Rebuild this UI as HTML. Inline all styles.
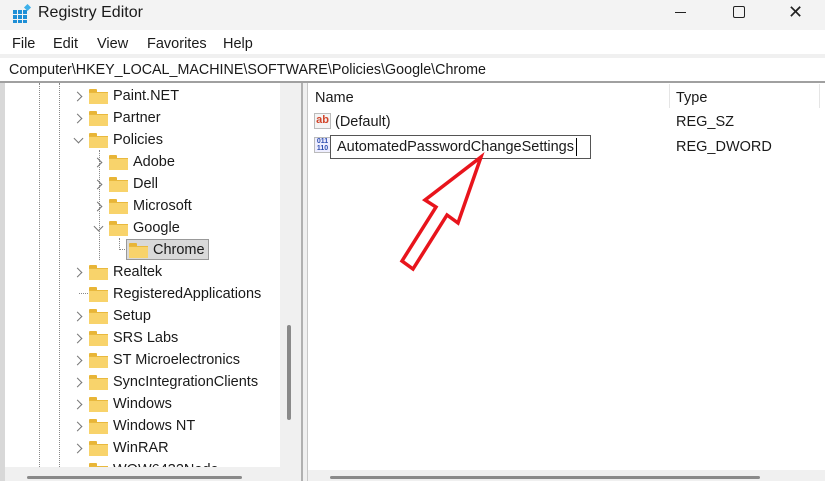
<!DOCTYPE html>
<html><head><style>
*{margin:0;padding:0;box-sizing:border-box}
body{width:825px;height:481px;overflow:hidden;background:#fff;font-family:"Liberation Sans",sans-serif;color:#1a1a1a;position:relative}
.a{position:absolute;white-space:nowrap}
.t{font-size:14.5px}
.fold{position:absolute;width:19px;height:14px}
.fold:before{content:"";position:absolute;left:0;top:0;width:8px;height:4px;background:#e8b537;border-radius:1px 1px 0 0}
.fold:after{content:"";position:absolute;left:0;top:3px;width:19px;height:11px;background:#f8d36b;border-top:1px solid #e9b93e}
.chev{position:absolute;width:7px;height:7px;border-right:1.5px solid #777;border-bottom:1.5px solid #777}
.r{transform:rotate(-45deg)}
.d{transform:rotate(45deg)}
.vd{position:absolute;width:0;border-left:1px dotted #888}
</style></head><body>
<div class="a" style="left:0;top:0;width:825px;height:30px;background:#f3f3f3"></div>
<svg class="a" style="left:12px;top:4px" width="20" height="20" viewBox="0 0 20 20"><g fill="#1e8fd6"><rect x="1" y="6" width="4" height="4"/><rect x="6" y="6" width="4" height="4"/><rect x="1" y="11" width="4" height="4"/><rect x="6" y="11" width="4" height="4"/><rect x="11" y="11" width="4" height="4"/><rect x="1" y="16" width="4" height="3"/><rect x="6" y="16" width="4" height="3"/><rect x="11" y="16" width="4" height="3"/><rect x="11" y="6" width="4" height="4"/></g><rect x="13" y="1" width="5" height="5" fill="#3fb1ea" transform="rotate(45 15.5 3.5)"/></svg>
<div class="a" style="left:38px;top:4px;font-size:16px">Registry Editor</div>
<div class="a" style="left:675px;top:12px;width:11px;border-top:1px solid #222"></div>
<div class="a" style="left:733px;top:6px;width:12px;height:12px;border:1.3px solid #222;border-radius:2px"></div>
<div class="a" style="left:788px;top:2px;font-size:18px;color:#222">✕</div>
<div class="a t" style="left:12px;top:36px">File</div>
<div class="a t" style="left:53px;top:36px">Edit</div>
<div class="a t" style="left:97px;top:36px">View</div>
<div class="a t" style="left:147px;top:36px">Favorites</div>
<div class="a t" style="left:223px;top:36px">Help</div>
<div class="a" style="left:0;top:54px;width:825px;height:4px;background:#f0f0f0"></div>
<div class="a" style="left:9px;top:62px;font-size:14.3px">Computer\HKEY_LOCAL_MACHINE\SOFTWARE\Policies\Google\Chrome</div>
<div class="a" style="left:0;top:81px;width:825px;height:2px;background:#a0a0a0"></div>
<div class="a" style="left:0;top:83px;width:5px;height:398px;background:#d8d8d8"></div>
<div class="a" style="left:280px;top:83px;width:22px;height:398px;background:#f0f0f0"></div>
<div class="a" style="left:287px;top:325px;width:4px;height:95px;background:#8a8a8a;border-radius:2px"></div>
<div class="a" style="left:301px;top:83px;width:2px;height:398px;background:#b0b0b0"></div>
<div class="a" style="left:303px;top:83px;width:5px;height:398px;background:#f0f0f0"></div>
<div class="a" style="left:307px;top:83px;width:1px;height:398px;background:#c8c8c8"></div>
<div class="a" style="left:5px;top:467px;width:275px;height:14px;background:#f0f0f0"></div>
<div class="a" style="left:27px;top:476px;width:215px;height:3px;background:#8a8a8a;border-radius:2px"></div>
<div class="a" style="left:308px;top:470px;width:517px;height:11px;background:#f0f0f0"></div>
<div class="a" style="left:330px;top:476px;width:430px;height:3px;background:#8a8a8a;border-radius:2px"></div>
<div class="vd" style="left:39px;top:83px;height:384px"></div>
<div class="vd" style="left:59px;top:83px;height:384px"></div>
<div class="vd" style="left:99px;top:150px;height:110px"></div>
<div class="vd" style="left:119px;top:238px;height:12px"></div>
<div class="a" style="left:119px;top:249px;width:10px;border-top:1px dotted #888"></div>
<div class="a" style="left:79px;top:293px;width:9px;border-top:1px dotted #888"></div>

<div class="chev r" style="left:74px;top:93px"></div><div class="fold" style="left:89px;top:89px"></div><div class="a t" style="left:113px;top:88px">Paint.NET</div>
<div class="chev r" style="left:74px;top:115px"></div><div class="fold" style="left:89px;top:111px"></div><div class="a t" style="left:113px;top:110px">Partner</div>
<div class="chev d" style="left:75px;top:135px"></div><div class="fold" style="left:89px;top:133px"></div><div class="a t" style="left:113px;top:132px">Policies</div>
<div class="chev r" style="left:94px;top:159px"></div><div class="fold" style="left:109px;top:155px"></div><div class="a t" style="left:133px;top:154px">Adobe</div>
<div class="chev r" style="left:94px;top:181px"></div><div class="fold" style="left:109px;top:177px"></div><div class="a t" style="left:133px;top:176px">Dell</div>
<div class="chev r" style="left:94px;top:203px"></div><div class="fold" style="left:109px;top:199px"></div><div class="a t" style="left:133px;top:198px">Microsoft</div>
<div class="chev d" style="left:95px;top:223px"></div><div class="fold" style="left:109px;top:221px"></div><div class="a t" style="left:133px;top:220px">Google</div>
<div class="a" style="left:126px;top:239px;width:83px;height:21px;background:#d9d9d9;border:1px solid #999"></div>
<div class="fold" style="left:129px;top:243px"></div><div class="a t" style="left:153px;top:242px">Chrome</div>
<div class="chev r" style="left:74px;top:269px"></div><div class="fold" style="left:89px;top:265px"></div><div class="a t" style="left:113px;top:264px">Realtek</div>
<div class="fold" style="left:89px;top:287px"></div><div class="a t" style="left:113px;top:286px">RegisteredApplications</div>
<div class="chev r" style="left:74px;top:313px"></div><div class="fold" style="left:89px;top:309px"></div><div class="a t" style="left:113px;top:308px">Setup</div>
<div class="chev r" style="left:74px;top:335px"></div><div class="fold" style="left:89px;top:331px"></div><div class="a t" style="left:113px;top:330px">SRS Labs</div>
<div class="chev r" style="left:74px;top:357px"></div><div class="fold" style="left:89px;top:353px"></div><div class="a t" style="left:113px;top:352px">ST Microelectronics</div>
<div class="chev r" style="left:74px;top:379px"></div><div class="fold" style="left:89px;top:375px"></div><div class="a t" style="left:113px;top:374px">SyncIntegrationClients</div>
<div class="chev r" style="left:74px;top:401px"></div><div class="fold" style="left:89px;top:397px"></div><div class="a t" style="left:113px;top:396px">Windows</div>
<div class="chev r" style="left:74px;top:423px"></div><div class="fold" style="left:89px;top:419px"></div><div class="a t" style="left:113px;top:418px">Windows NT</div>
<div class="chev r" style="left:74px;top:445px"></div><div class="fold" style="left:89px;top:441px"></div><div class="a t" style="left:113px;top:440px">WinRAR</div>
<div class="a" style="left:5px;top:460px;width:275px;height:7px;overflow:hidden"><div class="fold" style="left:84px;top:3px"></div><div class="a t" style="left:108px;top:2px">WOW6432Node</div></div>

<div class="a t" style="left:315px;top:90px">Name</div>
<div class="a" style="left:669px;top:84px;width:1px;height:24px;background:#e5e5e5"></div>
<div class="a t" style="left:676px;top:90px">Type</div>
<div class="a" style="left:819px;top:84px;width:1px;height:24px;background:#e5e5e5"></div>
<div class="a" style="left:314px;top:113px;width:17px;height:16px;background:#f4f4f4;border:1px solid #bbb;font-size:11px;font-weight:bold;color:#d2452a;line-height:12px;text-align:center">ab</div>
<div class="a t" style="left:335px;top:114px">(Default)</div>
<div class="a t" style="left:676px;top:114px">REG_SZ</div>
<div class="a" style="left:314px;top:137px;width:17px;height:16px;background:#eef;border:1px solid #bbb;font-size:7px;font-weight:bold;color:#2f4fb0;line-height:7px;text-align:center">011<br>110</div>
<div class="a" style="left:330px;top:135px;width:261px;height:24px;border:1px solid #555;background:#fff"></div>
<div class="a t" style="left:337px;top:139px">AutomatedPasswordChangeSettings</div>
<div class="a" style="left:576px;top:138px;width:1px;height:18px;background:#000"></div>
<div class="a t" style="left:676px;top:139px">REG_DWORD</div>
<svg class="a" style="left:0;top:0" width="825" height="481"><polygon points="481,157 458,223 447,215 413,269 402,261 436,207 425,200" fill="none" stroke="#e8141c" stroke-width="3.5" stroke-linejoin="miter"/></svg>
</body></html>
